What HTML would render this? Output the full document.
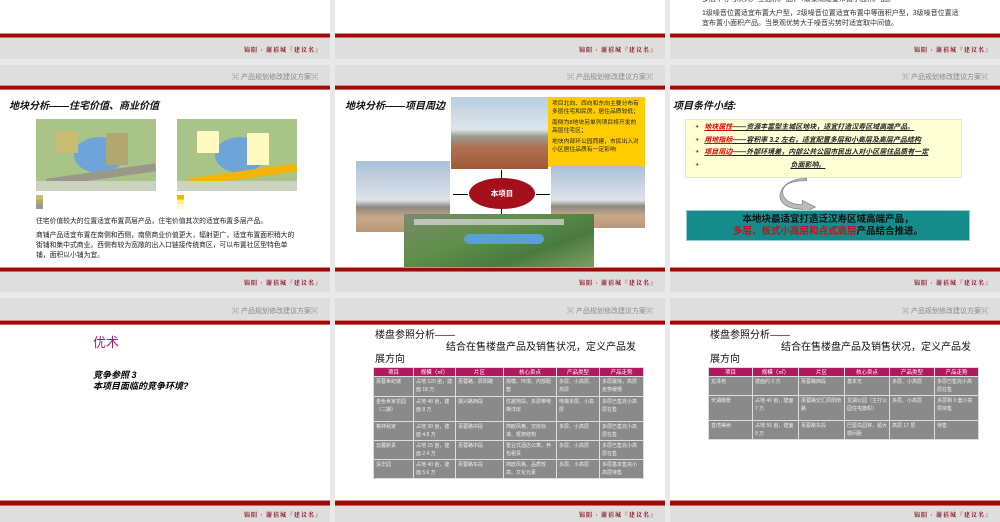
<!DOCTYPE html><html><head><meta charset="utf-8"><style>
*{margin:0;padding:0;box-sizing:border-box}
body{width:1000px;height:522px;overflow:hidden;background:#e9e9e9;position:relative;font-family:"Liberation Sans","Noto Sans CJK SC",sans-serif}
.a{position:absolute}
.w{background:#fff}
.red{background:#9d0a0a;border-top:1px solid #d88;border-bottom:1px solid #c66}
.g{background:#dedede}
.ft{font-size:6px;color:#8a1020;text-align:right;font-family:"Noto Serif CJK SC",serif;font-weight:bold;letter-spacing:1px}
.hd{font-size:7px;color:#888;text-align:right}
.t{font-size:10px;font-weight:bold;font-style:italic;color:#111}
.sm{font-size:6.5px;color:#222;line-height:10px}
.bt{font-size:10px;line-height:12px;color:#111}
table{border-collapse:collapse;font-size:5px;color:#eee;position:absolute}
td{border:1px solid #ddd;background:#8a8a8a;vertical-align:top;padding:1px 2px;line-height:8px}
th{background:#b01860;color:#fff;font-weight:normal;border:1px solid #ddd;height:9px;font-size:5.5px}
.ph{position:absolute;background:linear-gradient(#b8cde0 0%,#dfe6ea 45%,#9a9a90 55%,#b07050 70%,#a05a3a 100%)}
.ph2{position:absolute;background:linear-gradient(#a9c0d8 0%,#dde3e8 55%,#8c8a80 65%,#c8a888 80%,#b89878 100%)}
</style></head><body>
<div class="a w" style="left:0;top:0;width:330px;height:33px"></div>
<div class="a w" style="left:335px;top:0;width:330px;height:33px"></div>
<div class="a w" style="left:670px;top:0;width:330px;height:33px"></div>
<div class="a sm" style="left:702px;top:-5px;width:270px;font-size:7px;color:#333">多层中等与次大户型面积产品，4级景观适宜布置小面积产品。</div>
<div class="a sm" style="left:702px;top:9px;width:262px;font-size:7px;color:#333;line-height:10px">1级噪音位置适宜布置大户型，2级噪音位置适宜布置中等面积户型，3级噪音位置适宜布置小面积产品。当景观优势大于噪音劣势时适宜取中间值。</div>

<div class="a red" style="left:0;top:33px;width:330px;height:5px"></div>
<div class="a red" style="left:335px;top:33px;width:330px;height:5px"></div>
<div class="a red" style="left:670px;top:33px;width:330px;height:5px"></div>
<div class="a g ft" style="left:0;top:38px;width:330px;height:21px;padding:7px 8px 0 0">锦阳 · 谢禧城『建议名』</div>
<div class="a g ft" style="left:335px;top:38px;width:330px;height:21px;padding:7px 8px 0 0">锦阳 · 谢禧城『建议名』</div>
<div class="a g ft" style="left:670px;top:38px;width:330px;height:21px;padding:7px 8px 0 0">锦阳 · 谢禧城『建议名』</div>
<div class="a g hd" style="left:0;top:65px;width:330px;height:20px;padding:7px 12px 0 0">⌘ 产品规划修改建议方案⌘</div>
<div class="a g hd" style="left:335px;top:65px;width:330px;height:20px;padding:7px 12px 0 0">⌘ 产品规划修改建议方案⌘</div>
<div class="a g hd" style="left:670px;top:65px;width:330px;height:20px;padding:7px 12px 0 0">⌘ 产品规划修改建议方案⌘</div>
<div class="a red" style="left:0;top:85px;width:330px;height:5px"></div>
<div class="a red" style="left:335px;top:85px;width:330px;height:5px"></div>
<div class="a red" style="left:670px;top:85px;width:330px;height:5px"></div>
<div class="a w" style="left:0;top:90px;width:330px;height:177px"></div>
<div class="a w" style="left:335px;top:90px;width:330px;height:177px"></div>
<div class="a w" style="left:670px;top:90px;width:330px;height:177px"></div>
<div class="a red" style="left:0;top:267px;width:330px;height:5px"></div>
<div class="a red" style="left:335px;top:267px;width:330px;height:5px"></div>
<div class="a red" style="left:670px;top:267px;width:330px;height:5px"></div>
<div class="a g ft" style="left:0;top:272px;width:330px;height:20px;padding:6px 8px 0 0">锦阳 · 谢禧城『建议名』</div>
<div class="a g ft" style="left:335px;top:272px;width:330px;height:20px;padding:6px 8px 0 0">锦阳 · 谢禧城『建议名』</div>
<div class="a g ft" style="left:670px;top:272px;width:330px;height:20px;padding:6px 8px 0 0">锦阳 · 谢禧城『建议名』</div>
<div class="a g hd" style="left:0;top:298px;width:330px;height:22px;padding:8px 12px 0 0">⌘ 产品规划修改建议方案⌘</div>
<div class="a g hd" style="left:335px;top:298px;width:330px;height:22px;padding:8px 12px 0 0">⌘ 产品规划修改建议方案⌘</div>
<div class="a g hd" style="left:670px;top:298px;width:330px;height:22px;padding:8px 12px 0 0">⌘ 产品规划修改建议方案⌘</div>
<div class="a red" style="left:0;top:320px;width:330px;height:5px"></div>
<div class="a red" style="left:335px;top:320px;width:330px;height:5px"></div>
<div class="a red" style="left:670px;top:320px;width:330px;height:5px"></div>
<div class="a w" style="left:0;top:325px;width:330px;height:175px"></div>
<div class="a w" style="left:335px;top:325px;width:330px;height:175px"></div>
<div class="a w" style="left:670px;top:325px;width:330px;height:175px"></div>
<div class="a red" style="left:0;top:500px;width:330px;height:6px"></div>
<div class="a red" style="left:335px;top:500px;width:330px;height:6px"></div>
<div class="a red" style="left:670px;top:500px;width:330px;height:6px"></div>
<div class="a g ft" style="left:0;top:506px;width:330px;height:16px;padding:4px 8px 0 0">锦阳 · 谢禧城『建议名』</div>
<div class="a g ft" style="left:335px;top:506px;width:330px;height:16px;padding:4px 8px 0 0">锦阳 · 谢禧城『建议名』</div>
<div class="a g ft" style="left:670px;top:506px;width:330px;height:16px;padding:4px 8px 0 0">锦阳 · 谢禧城『建议名』</div>

<!-- Slide 1 mid -->
<div class="a t" style="left:9px;top:97px">地块分析——住宅价值、商业价值</div>
<div class="a" style="left:36px;top:119px;width:120px;height:72px;background:#a8c488">
 <div class="a" style="left:38px;top:18px;width:50px;height:36px;border-radius:50%;background:#6fa4d8"></div>
 <div class="a" style="left:20px;top:12px;width:22px;height:22px;background:#c8bd70"></div>
 <div class="a" style="left:70px;top:14px;width:22px;height:32px;background:#b0a870"></div>
 <div class="a" style="left:10px;top:52px;width:110px;height:8px;background:#9a9888;transform:rotate(-8deg)"></div>
 <div class="a" style="left:0;top:62px;width:120px;height:10px;background:#c9d3c0"></div>
</div>
<div class="a" style="left:36px;top:195px;width:7px;height:14px;background:linear-gradient(#c8bd70 33%,#b0a870 33% 66%,#999 66%)"></div>
<div class="a" style="left:177px;top:119px;width:120px;height:72px;background:#a8c488">
 <div class="a" style="left:38px;top:18px;width:50px;height:36px;border-radius:50%;background:#6fa4d8"></div>
 <div class="a" style="left:20px;top:12px;width:22px;height:22px;background:#fffbc0"></div>
 <div class="a" style="left:70px;top:14px;width:22px;height:32px;background:#fffbc0"></div>
 <div class="a" style="left:10px;top:52px;width:110px;height:8px;background:#f4b400;transform:rotate(-8deg)"></div>
 <div class="a" style="left:0;top:62px;width:120px;height:10px;background:#c9d3c0"></div>
</div>
<div class="a" style="left:177px;top:195px;width:7px;height:14px;background:linear-gradient(#f4b400 33%,#fff080 33% 66%,#fffbd0 66%)"></div>
<div class="a sm" style="left:36px;top:217px;width:262px;font-size:6.8px">住宅价值较大的位置适宜布置高层产品，住宅价值其次的适宜布置多层产品。</div>
<div class="a sm" style="left:36px;top:231px;width:262px;font-size:6.8px">商铺产品适宜布置在南侧和西侧，南侧商业价值更大，辐射更广，适宜布置面积稍大的街铺和集中式商业。西侧有较为宽敞的出入口链接传统商区，可以布置社区型特色单铺，面积以小铺为宜。</div>

<!-- Slide 2 mid -->
<div class="a t" style="left:345px;top:97px">地块分析——项目周边</div>
<div class="ph" style="left:451px;top:97px;width:97px;height:72px"></div>
<div class="a" style="left:548px;top:97px;width:97px;height:70px;background:#ffcc00;font-size:5.8px;line-height:8px;padding:3px 4px;color:#222">项目北向、西向和东向主要分布有多层住宅和民房，居住品质较低；<div style="height:3px"></div>南侧为8地块另单列项目将开发的高层住宅区；<div style="height:3px"></div>地块内部环公园而建，市民出入对小区居住品质有一定影响</div>
<div class="ph2" style="left:356px;top:161px;width:94px;height:71px"></div>
<div class="ph2" style="left:551px;top:166px;width:94px;height:62px"></div>
<div class="a" style="left:469px;top:178px;width:66px;height:31px;border-radius:50%;background:#a3101c;color:#fff;font-size:7.5px;text-align:center;line-height:31px;font-weight:bold">本项目</div>
<div class="a" style="left:501px;top:170px;width:1px;height:8px;background:#000"></div>
<div class="a" style="left:501px;top:209px;width:1px;height:6px;background:#000"></div>
<div class="a" style="left:453px;top:194px;width:15px;height:1px;background:#000"></div>
<div class="a" style="left:536px;top:194px;width:14px;height:1px;background:#000"></div>
<div class="a" style="left:404px;top:214px;width:190px;height:53px;background:linear-gradient(160deg,#7a8a70,#5f8f48 40%,#4a7a40 70%,#7da060)">
 <div class="a" style="left:60px;top:20px;width:80px;height:10px;background:#5aa0d8;border-radius:5px"></div>
 <div class="a" style="left:10px;top:5px;width:150px;height:6px;background:#ddd;opacity:.7"></div>
</div>

<!-- Slide 3 mid -->
<div class="a t" style="left:673px;top:97px">项目条件小结:</div>
<div class="a" style="left:685px;top:119px;width:277px;height:59px;background:#ffffd6;border:1px solid #e8e8c8;font-size:7px;font-style:italic;font-weight:bold;line-height:12.5px;padding:2px 0 0 10px;color:#222;white-space:nowrap">
<div><span style="color:#d00">•&nbsp;&nbsp;&nbsp;<u>地块属性</u></span><u>——资源丰富型主城区地块，适宜打造汉寿区域高端产品。</u></div>
<div><span style="color:#d00">•&nbsp;&nbsp;&nbsp;<u>用地指标</u></span><u>——容积率 3.2 左右，适宜配置多层和小高层及高层产品结构</u></div>
<div><span style="color:#d00">•&nbsp;&nbsp;&nbsp;<u>项目周边</u></span><u>——外部环境差，内部公共公园市民出入对小区居住品质有一定</u></div>
<div><span style="color:#d00">•</span><span style="padding-left:92px"><u>负面影响。</u></span></div>
</div>
<svg class="a" style="left:778px;top:178px" width="44" height="36" viewBox="0 0 40 32"><path d="M26 2 C8 2 2 8 5 16 C8 22 16 24 22 24 L22 20 L34 26 L22 32 L22 28 C12 28 0 24 2 14 C4 6 12 0 26 0 Z" fill="#bbb" stroke="#888" stroke-width=".7"/></svg>
<div class="a" style="left:686px;top:210px;width:284px;height:31px;background:#168b8b;border:1px solid #9cc;text-align:center;font-size:9.5px;font-weight:bold;line-height:12px;padding-top:3px;color:#111">本地块最适宜打造泛汉寿区域高端产品，<br><span style="color:#c0141c">多层、板式小高层和点式高层</span>产品结合推进。</div>

<!-- Slide 1 bottom -->
<div class="a" style="left:93px;top:332px;font-size:13px;color:#a0206a">优术</div>
<div class="a" style="left:93px;top:370px;font-size:9px;font-weight:bold;font-style:italic;line-height:11px">竞争参照 3<br>本项目面临的竞争环境?</div>

<!-- Slide 2 bottom -->
<div class="a bt" style="left:375px;top:330px">楼盘参照分析——</div>
<div class="a bt" style="left:446px;top:342px">结合在售楼盘产品及销售状况，定义产品发</div>
<div class="a bt" style="left:375px;top:354px">展方向</div>
<table style="left:373px;top:367px;width:271px">
<tr><th style="width:40px">项目</th><th style="width:42px">规模（㎡）</th><th style="width:48px">片区</th><th style="width:53px">核心卖点</th><th style="width:43px">产品类型</th><th>产品走势</th></tr>
<tr style="height:20px"><td>芙蓉世纪城</td><td>占地 120 亩，建面 18 万</td><td>芙蓉路、辰阳路</td><td>规模、环境、内部配套</td><td>多层、小高层、高层</td><td>多层最快，高层走势缓慢</td></tr>
<tr style="height:25px"><td>金色世家花园（二期）</td><td>占地 48 亩，建面 8 万</td><td>振兴路西段</td><td>优越地段，多层带电梯洋房</td><td>电梯多层、小高层</td><td>多层已售完小高层在售</td></tr>
<tr style="height:19px"><td>格林秋家</td><td>占地 30 亩，建面 4.8 万</td><td>芙蓉路中段</td><td>简欧风格、交房标准、框架结构</td><td>多层、小高层</td><td>多层已售完小高层在售</td></tr>
<tr style="height:19px"><td>云麓新贵</td><td>占地 15 亩，建面 2.4 万</td><td>芙蓉路中段</td><td>置业式酒店公寓，养包租赁</td><td>多层、小高层</td><td>多层已售完小高层在售</td></tr>
<tr style="height:19px"><td>清华园</td><td>占地 40 亩，建面 5.6 万</td><td>芙蓉路东段</td><td>简欧风格、品质较高、文化元素</td><td>多层、小高层</td><td>多层基本售完小高层待售</td></tr>
</table>

<!-- Slide 3 bottom -->
<div class="a bt" style="left:710px;top:330px">楼盘参照分析——</div>
<div class="a bt" style="left:781px;top:342px">结合在售楼盘产品及销售状况，定义产品发</div>
<div class="a bt" style="left:710px;top:354px">展方向</div>
<table style="left:708px;top:367px;width:271px">
<tr><th style="width:44px">项目</th><th style="width:46px">规模（㎡）</th><th style="width:46px">片区</th><th style="width:45px">核心卖点</th><th style="width:45px">产品类型</th><th>产品走势</th></tr>
<tr style="height:19px"><td>龙泽苑</td><td>建面约 3 万</td><td>芙蓉路西段</td><td>基本无</td><td>多层、小高层</td><td>多层已售完小高层在售</td></tr>
<tr style="height:25px"><td>天湖御景</td><td>占地 40 亩，建面 7 万</td><td>芙蓉路交汇辰阳南路</td><td>龙湖公园（主打公园住宅旗帜）</td><td>多层、小高层</td><td>多层剩 3 套小高层待售</td></tr>
<tr style="height:19px"><td>直湾美树</td><td>占地 55 亩，建面 9 万</td><td>芙蓉路东段</td><td>巴厘岛园林，超大楼间距</td><td>高层 17 层</td><td>待售</td></tr>
</table>
</body></html>
